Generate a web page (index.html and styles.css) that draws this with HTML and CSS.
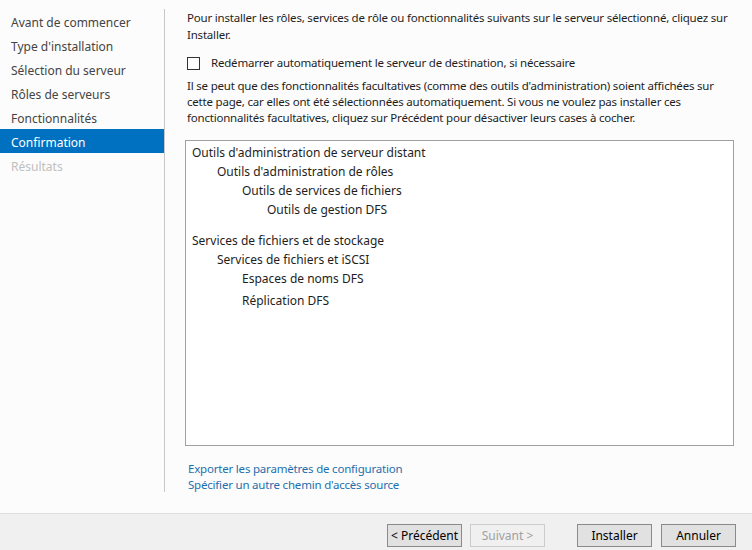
FILE: index.html
```html
<!DOCTYPE html>
<html lang="fr">
<head>
    <meta charset="UTF-8">
    <meta name="viewport" content="width=device-width, initial-scale=1.0">
    <title>Confirmer les sélections d'installation</title>
    <link rel="stylesheet" href="styles.css">
</head>
<body>
    <div class="main">
        <ul class="steps">
            <li>Avant de commencer</li>
            <li>Type d'installation</li>
            <li>Sélection du serveur</li>
            <li>Rôles de serveurs</li>
            <li>Fonctionnalités</li>
            <li class="active">Confirmation</li>
            <li class="disabled">Résultats</li>
        </ul>

        <div class="content">
            <p class="intro">Pour installer les rôles, services de rôle ou fonctionnalités suivants sur le serveur sélectionné, cliquez sur Installer.</p>

            <label class="check">
                <span class="box"></span>
                Redémarrer automatiquement le serveur de destination, si nécessaire
            </label>

            <p class="note">Il se peut que des fonctionnalités facultatives (comme des outils d'administration) soient affichées sur cette page, car elles ont été sélectionnées automatiquement. Si vous ne voulez pas installer ces fonctionnalités facultatives, cliquez sur Précédent pour désactiver leurs cases à cocher.</p>

            <div class="selection">
                <div class="item lvl0">Outils d'administration de serveur distant</div>
                <div class="item lvl1">Outils d'administration de rôles</div>
                <div class="item lvl2">Outils de services de fichiers</div>
                <div class="item lvl3">Outils de gestion DFS</div>
                <div class="item lvl0 group">Services de fichiers et de stockage</div>
                <div class="item lvl1">Services de fichiers et iSCSI</div>
                <div class="item lvl2">Espaces de noms DFS</div>
                <div class="item lvl2 last">Réplication DFS</div>
            </div>

            <div class="links">
                <a href="#">Exporter les paramètres de configuration</a>
                <a href="#">Spécifier un autre chemin d'accès source</a>
            </div>
        </div>
    </div>

    <div class="footer">
        <button>&lt; Précédent</button>
        <button class="next" disabled>Suivant &gt;</button>
        <button class="install">Installer</button>
        <button class="cancel">Annuler</button>
    </div>
</body>
</html>
```

FILE: styles.css
```css
body {
    font-family: 'Noto Sans', 'Open Sans', sans-serif;
    font-size: 12px;
    line-height: 16px;
    color: #1e1e1e;
    margin: 0;
    background-color: #fcfcfc;
    width: 752px;
    height: 550px;
    overflow: hidden;
}

.main {
    display: flex;
    height: 513px;
}

.steps {
    list-style: none;
    margin: 9px 0 0 0;
    padding: 0;
    width: 164px;
    height: 483px;
    border-right: 1px solid #c8c8c8;
    flex-shrink: 0;
}

.steps li {
    height: 24px;
    line-height: 28px;
    padding-left: 11px;
    color: #444;
}

.steps li.active {
    background-color: #0070c0;
    color: white;
}

.steps li.disabled {
    color: #c0c0c0;
}

.content {
    padding: 9px 0 0 22px;
    width: 548px;
}

.intro,
.check,
.note,
.links {
    font-size: 11.5px;
    letter-spacing: -0.2px;
}

.intro {
    margin: 0;
    line-height: 17px;
}

.check {
    display: flex;
    align-items: center;
    margin-top: 12px;
    height: 16px;
}

.check .box {
    width: 11px;
    height: 11px;
    border: 1px solid #333;
    background-color: white;
    margin: 0 11px 0 0;
}

.note {
    margin: 7px 0 0 0;
}

.selection {
    margin: 14px 0 0 -2px;
    width: 547px;
    height: 302px;
    border: 1px solid #a0a0a0;
    background-color: white;
    padding-top: 2px;
    box-sizing: content-box;
}

.item {
    height: 19px;
    line-height: 19px;
}

.lvl0 { padding-left: 6px; }
.lvl1 { padding-left: 31px; }
.lvl2 { padding-left: 56px; }
.lvl3 { padding-left: 81px; }

.item.group {
    margin-top: 12px;
}

.item.last {
    margin-top: 3px;
}

.links {
    margin-top: 15px;
    padding-left: 1px;
}

.links a {
    display: block;
    color: #1e6fae;
    text-decoration: none;
}

.footer {
    height: 36px;
    border-top: 1px solid #dfdfdf;
    background-color: #f0f0f0;
    display: flex;
    justify-content: flex-end;
    align-items: flex-start;
    padding-right: 16px;
}

.footer button {
    font-family: inherit;
    font-size: 12px;
    width: 75px;
    height: 23px;
    margin-top: 10px;
    background-color: #e1e1e1;
    border: 1px solid #8a8a8a;
    color: #000;
    padding: 0;
}

.footer .next {
    margin-left: 8px;
    border-color: #cccccc;
    background-color: #f0f0f0;
    color: #a0a0a0;
}

.footer .install {
    margin-left: 32px;
}

.footer .cancel {
    margin-left: 9px;
}
```
